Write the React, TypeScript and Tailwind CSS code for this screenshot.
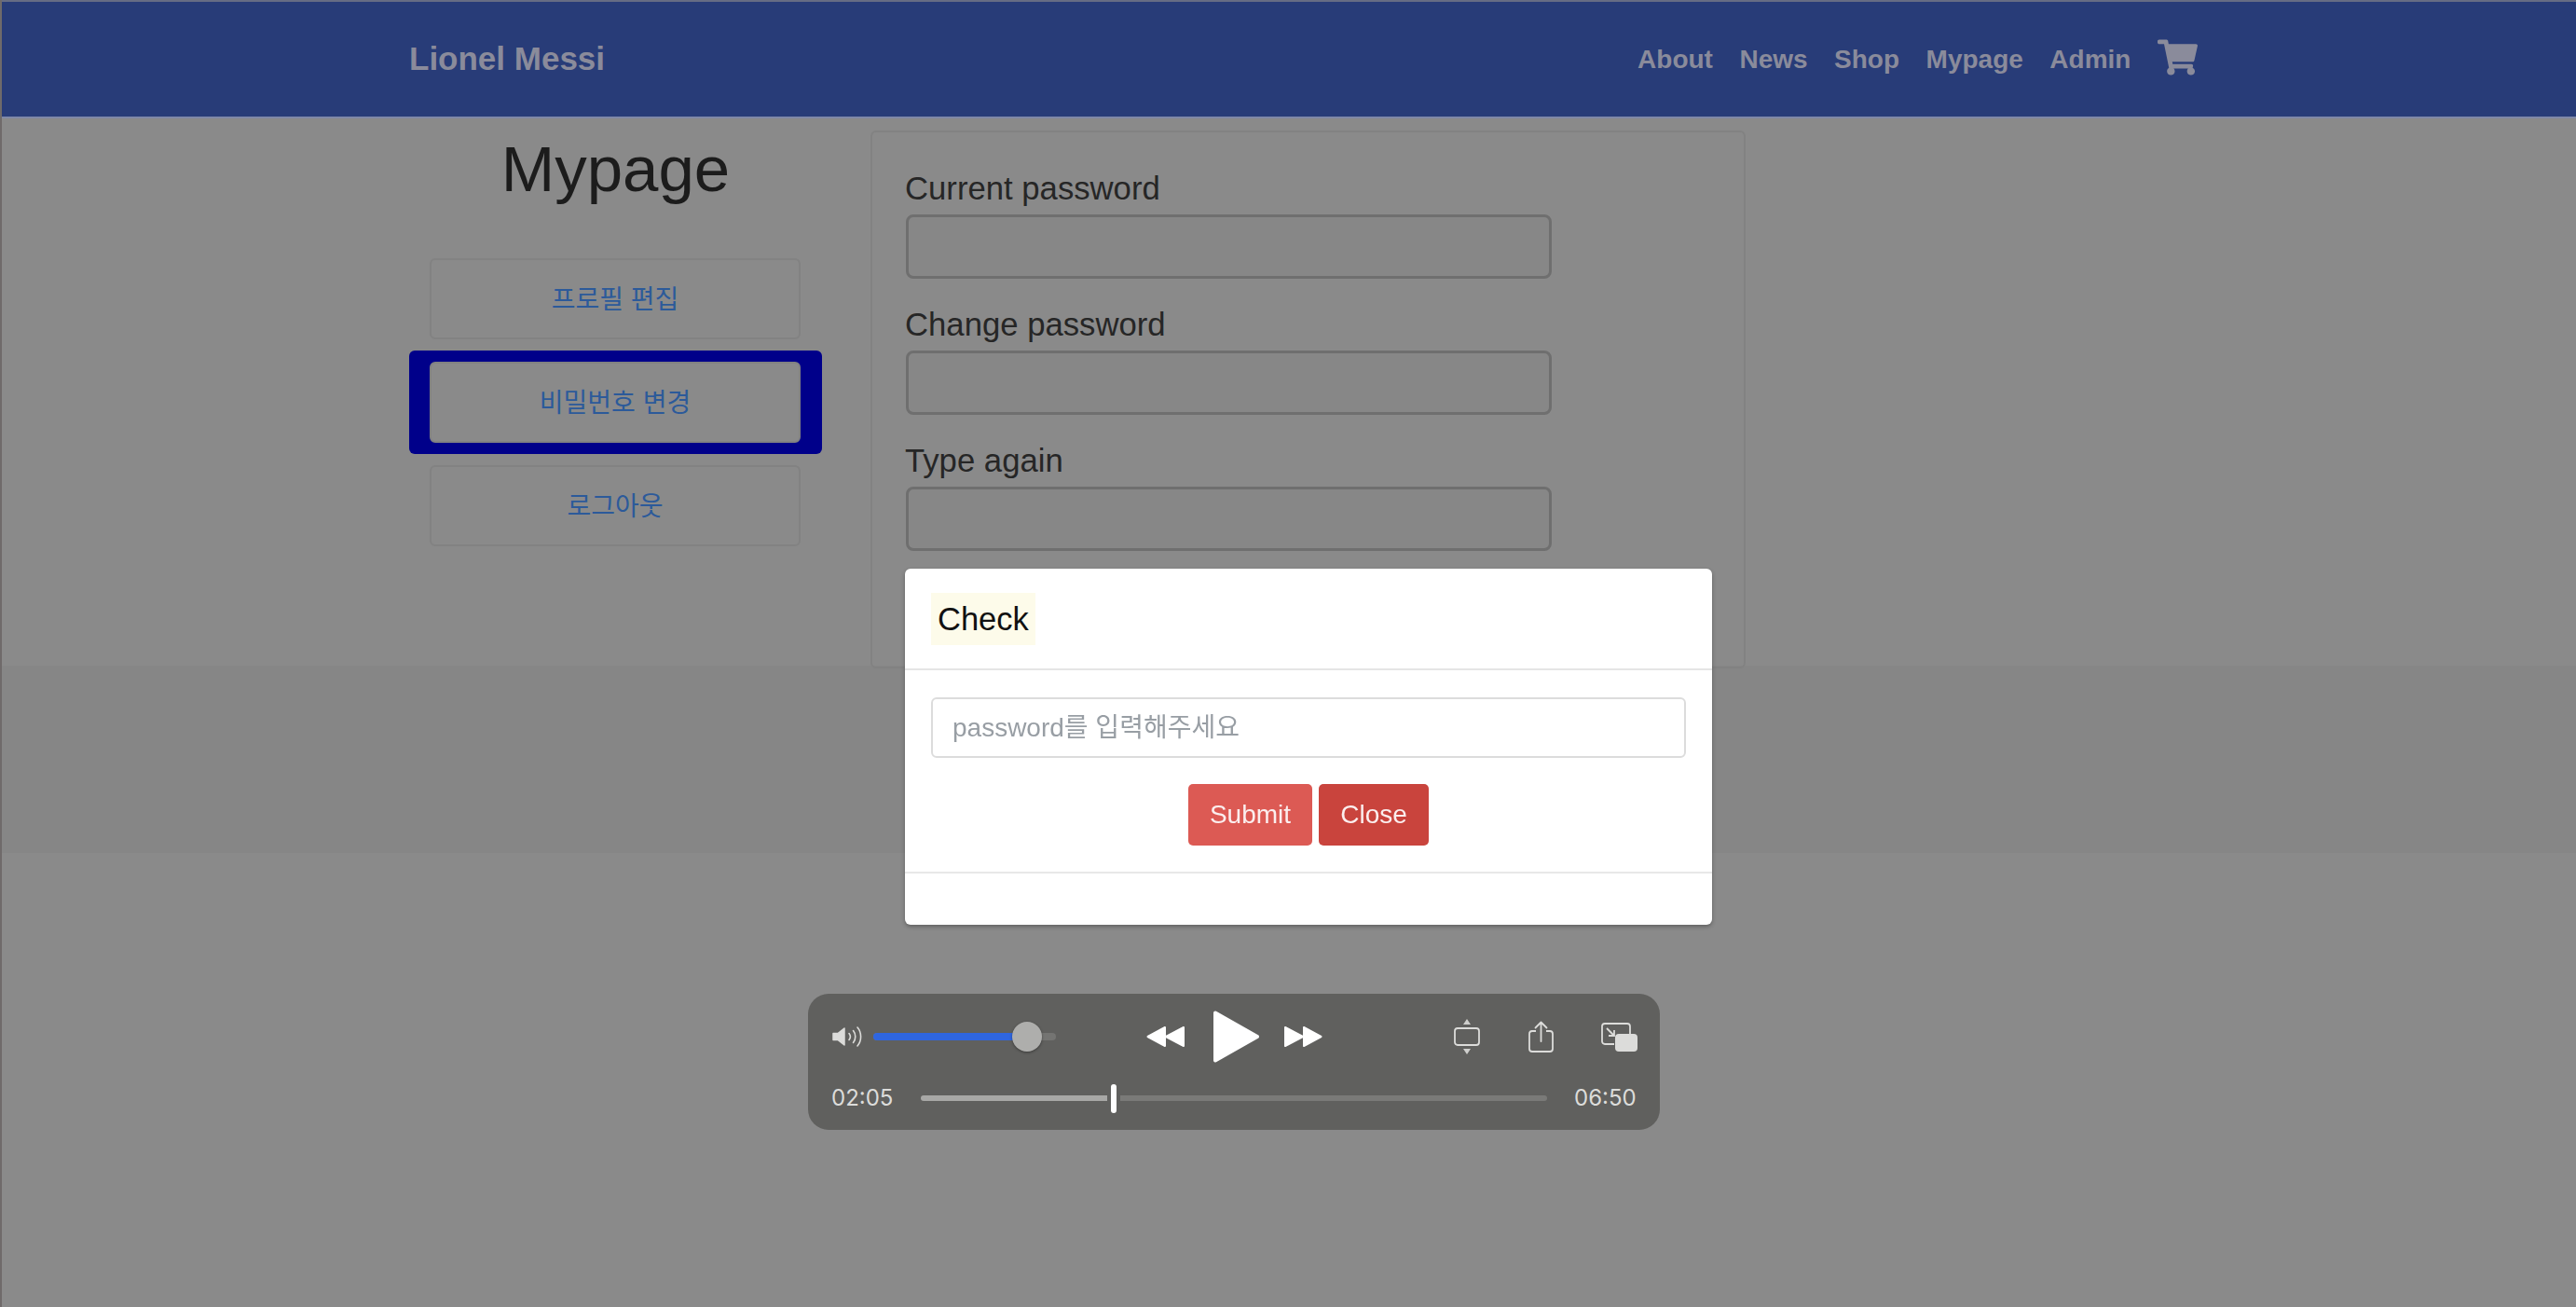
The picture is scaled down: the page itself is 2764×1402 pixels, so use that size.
import React from 'react'
import { FaShoppingCart } from 'react-icons/fa'

const fontStack = "font-['Liberation_Sans','Noto_Sans_CJK_KR',sans-serif]"

function Field({ label }: { label: string }) {
  return (
    <div className="mb-[24px]">
      <div className="h-[50px] leading-[50px] text-[34.7px] text-[#262626] mb-[3px]">{label}</div>
      <div className="h-[69px] w-[693px] ml-[1px] rounded-[8px] border-[3px] border-[#6f6f6f] bg-[#878787]" />
    </div>
  )
}

function SideLink({ label, active }: { label: string; active?: boolean }) {
  return (
    <div className={`pl-[22px] pr-[23px] py-[12px] rounded-[6px] ${active ? 'bg-[#00008a]' : ''}`}>
      <div className="h-[87px] pt-[2px] flex items-center justify-center rounded-[6px] border-2 border-[#828282] bg-[#8a8a8a] text-[28px] text-[#2c5a9a]">
        {label}
      </div>
    </div>
  )
}

function Player() {
  return (
    <div className="fixed left-[867px] top-[1066px] w-[914px] h-[146px] pt-[1px] rounded-[22px] bg-[#60605e] font-['Inter',sans-serif]">
      <div className="h-[90px] flex items-center pl-[26px]">
        <svg width="32" height="24" viewBox="0 0 32 24" fill="none">
          <path d="M1 8.5h5L13 3v18l-7-5.5H1z" fill="#dcdcda" stroke="#dcdcda" strokeWidth="1.5" strokeLinejoin="round" />
          <path d="M18 8.5c1.6 2 1.6 5 0 7M22.5 5.5c3 3.6 3 9.400 0 13M27 2c4.800 5.600 4.800 14.400 0 20" stroke="#dcdcda" strokeWidth="1.600" strokeLinecap="round" />
        </svg>
        <div className="relative ml-[12px] w-[196px] h-[8px] rounded-full bg-[#747472]">
          <div className="h-full w-[165px] rounded-full bg-[#2f66e0]" />
          <div className="absolute left-[149px] top-[-12px] w-[32px] h-[32px] rounded-full bg-[#aeaeac] shadow-[0_1px_3px_rgba(0,0,0,0.4)]" />
        </div>
        <svg className="ml-[97px]" width="41" height="24" viewBox="0 0 41 24" fill="#fff" stroke="#fff" strokeWidth="2" strokeLinejoin="round">
          <path d="M1.500 12L20 2v20zM21 12L40 2v20z" />
        </svg>
        <svg className="ml-[31px]" width="49" height="56" viewBox="0 0 49 56" fill="#fff" stroke="#fff" strokeWidth="4" strokeLinejoin="round">
          <path d="M2 2.500L47 28 2 53.500z" />
        </svg>
        <svg className="ml-[27px]" width="41" height="24" viewBox="0 0 41 24" fill="#fff" stroke="#fff" strokeWidth="2" strokeLinejoin="round">
          <path d="M1 2l19 10L1 22zM21 2l18.500 10L21 22z" />
        </svg>
        <svg className="ml-[141px]" width="28" height="38" viewBox="0 0 28 38" fill="none">
          <path d="M14 0l4 6h-8zM14 38l-4-6h8z" fill="#cfcfcd" />
          <rect x="1" y="10" width="26" height="18" rx="3" stroke="#dcdcda" strokeWidth="1.800" />
        </svg>
        <svg className="ml-[52px]" width="27" height="34" viewBox="0 0 27 34" fill="none" stroke="#dcdcda" strokeWidth="1.800">
          <path d="M8 11H4a3 3 0 0 0-3 3v16a3 3 0 0 0 3 3h19a3 3 0 0 0 3-3V14a3 3 0 0 0-3-3h-4" />
          <path d="M13.500 22V1.500M7.500 7.500l6-6 6 6" strokeLinecap="round" strokeLinejoin="round" />
        </svg>
        <svg className="ml-[51px]" width="39" height="31" viewBox="0 0 39 31" fill="none">
          <path d="M14 23H4a3 3 0 0 1-3-3V4a3 3 0 0 1 3-3h24a3 3 0 0 1 3 3v8" stroke="#dcdcda" strokeWidth="1.800" />
          <path d="M6 6l8 8M14 8v6H8" stroke="#dcdcda" strokeWidth="1.800" />
          <rect x="15" y="12" width="24" height="19" rx="4" fill="#dcdcda" />
        </svg>
      </div>
      <div className="h-[42px] flex items-center pl-[25px] text-[24px] text-[#dcdcda]">
        <span className="w-[65px]">02:05</span>
        <div className="ml-[31px] w-[672px] flex items-center">
          <div className="h-[6px] w-[200px] rounded-l-full bg-[#a8a8a6]" />
          <div className="mx-[4px] h-[31px] w-[6px] rounded-full bg-white" />
          <div className="h-[6px] flex-1 rounded-r-full bg-[#7a7a78]" />
        </div>
        <span className="ml-[29px] w-[66px]">06:50</span>
      </div>
    </div>
  )
}

export default function App() {
  return (
    <div className={`relative h-[1402px] overflow-hidden bg-[#8a8a8a] border-l-2 border-[#6f6a6a] ${fontStack}`}>
      {/* Navbar */}
      <nav className="h-[127px] -ml-[2px] flex items-center bg-[#283c78] border-t-2 border-b-2 border-t-[#666c84] border-b-[#7f88a8] pl-[439px] font-bold text-[#8a8b9b]">
        <a className="text-[35px]">Lionel Messi</a>
        <div className="ml-[1108px] flex items-center gap-[28.5px] text-[28px]">
          <a>About</a>
          <a>News</a>
          <a>Shop</a>
          <a>Mypage</a>
          <a>Admin</a>
          <FaShoppingCart className="w-[43px] h-[39px] -mt-[4px]" />
        </div>
      </nav>

      {/* Page content */}
      <div className="flex items-start pl-[437px] pt-[13px] h-[587px]">
        <aside className="w-[443px]">
          <h1 className="h-[84px] leading-[84px] text-[69px] text-center text-[#1c1c1c]">Mypage</h1>
          <div className="mt-[41px]">
            <SideLink label="프로필 편집" />
            <SideLink label="비밀번호 변경" active />
            <SideLink label="로그아웃" />
          </div>
        </aside>
        <section className="ml-[52px] w-[939px] h-[577px] rounded-[6px] border-2 border-[#828282] px-[35px] pt-[35px]">
          <Field label="Current password" />
          <Field label="Change password" />
          <Field label="Type again" />
        </section>
      </div>

      {/* Darker strip under the content */}
      <div className="h-[201px] bg-[#868686]" />

      {/* Modal */}
      <div className="fixed left-[971px] top-[610px] w-[866px] h-[382px] rounded-[6px] bg-white shadow-[0_2px_4px_rgba(0,0,0,0.3)] flex flex-col">
        <div className="h-[109px] shrink-0 border-b-2 border-[#e5e5e5] px-[28px] pt-[26px]">
          <span className="inline-block h-[56px] leading-[56px] px-[7px] bg-[#fdfbea] text-[34.5px] text-[#111]">Check</span>
        </div>
        <div className="h-[218px] shrink-0 border-b-2 border-[#e8e8e8] px-[28px] pt-[29px]">
          <input
            readOnly
            placeholder="password를 입력해주세요"
            className="w-full h-[65px] rounded-[6px] border-2 border-[#dcdcdc] px-[21px] text-[28px] placeholder:text-[#989ea4] outline-none"
          />
          <div className="mt-[28px] flex justify-center gap-[7px] text-[28px] text-[#fbeeee]">
            <button className="w-[133px] h-[66px] rounded-[5px] bg-[#dc5a54]">Submit</button>
            <button className="w-[118px] h-[66px] rounded-[5px] bg-[#c9443d]">Close</button>
          </div>
        </div>
      </div>

      <Player />
    </div>
  )
}
